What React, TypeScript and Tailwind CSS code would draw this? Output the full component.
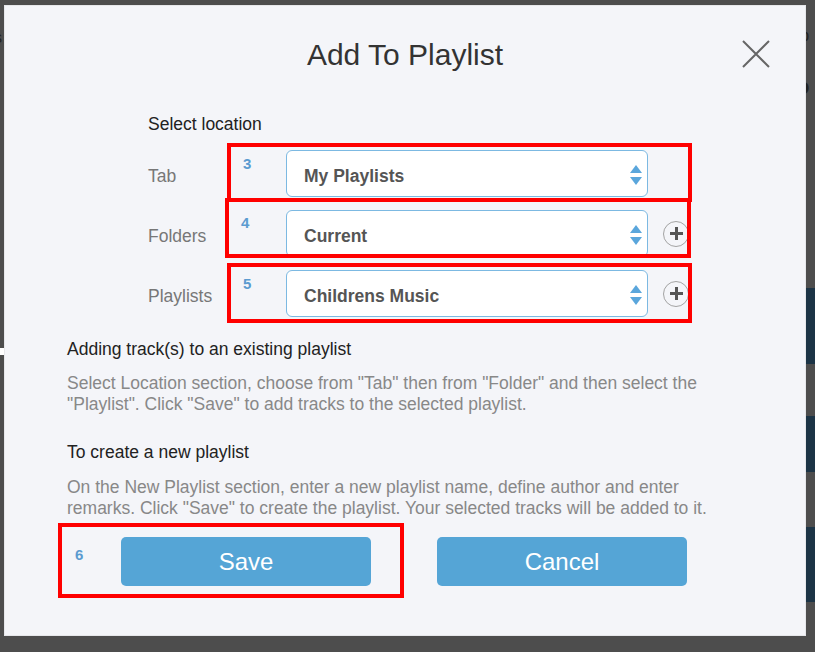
type Row = {
  label: string
  value: string
  num: string
  plus: boolean
  box: string
}

const rows: Row[] = [
  { label: "Tab", value: "My Playlists", num: "3", plus: false, box: "left-[79px] -top-[7px] w-[465px] h-[59px] pt-[9px]" },
  { label: "Folders", value: "Current", num: "4", plus: true, box: "left-[77px] -top-[12px] w-[466px] h-[60px] pt-[13px]" },
  { label: "Playlists", value: "Childrens Music", num: "5", plus: true, box: "left-[79px] -top-[7px] w-[465px] h-[60px] pt-[9px]" },
]

function Arrows() {
  return (
    <svg width="12" height="20" viewBox="0 0 12 20" className="absolute right-[5px] top-[14px]">
      <polygon points="6,0 12,8 0,8" fill="#5aa6dc" />
      <polygon points="0,12 12,12 6,20" fill="#5aa6dc" />
    </svg>
  )
}

function PlusButton() {
  return (
    <div className="ml-[15px] flex h-[26px] w-[26px] items-center justify-center rounded-full border-[1.5px] border-[#a3a3a3]">
      <svg width="13" height="13" viewBox="0 0 13 13">
        <rect x="5" y="0" width="3" height="13" fill="#555" />
        <rect x="0" y="5" width="13" height="3" fill="#555" />
      </svg>
    </div>
  )
}

function SelectRow({ row }: { row: Row }) {
  return (
    <div className="relative flex h-[47px] items-center">
      <span className="w-[138px] pt-[5px] text-[17.5px] text-[#777]">{row.label}</span>
      <div className="relative flex h-[47px] w-[362px] items-center rounded-[6px] border border-[#7cb9e2] bg-white pl-[17px] pt-[5px] text-[17.5px] font-bold text-[#555]">
        {row.value}
        <Arrows />
      </div>
      {row.plus && <PlusButton />}
      {/* annotation */}
      <div className={`pointer-events-none absolute border-[4px] border-[#ff0000] pl-[12px] text-[15px] font-bold leading-[15px] text-[#5b9bd0] ${row.box}`}>
        {row.num}
      </div>
    </div>
  )
}

export default function App() {
  return (
    <div className="relative h-[652px] w-[815px] overflow-hidden bg-[#4d4d4d] font-['Liberation_Sans',Arial,sans-serif]">
      {/* page behind the dialog */}
      <span className="absolute -left-[6px] top-[26px] text-[16px] text-[#222]">s</span>
      <span className="absolute left-[770px] top-[24px] text-[16px] text-[#222]">Temp</span>
      <span className="absolute left-[780px] top-[70px] text-[22px] font-bold text-[#222]">Co</span>
      <div className="absolute left-0 top-[348px] h-[7px] w-[6px] bg-white" />
      <div className="absolute left-[790px] top-[288px] h-[76px] w-[40px] bg-[#1c3446]" />
      <div className="absolute left-[790px] top-[416px] h-[56px] w-[40px] bg-[#1c3446]" />
      <div className="absolute left-[790px] top-[527px] h-[75px] w-[40px] bg-[#1c3446]" />

      <div className="absolute left-[4px] top-[5px] h-[631px] w-[802px] border border-[#e6e7ea] bg-[#f4f5f9]">
        <div className="relative pt-[32px] text-center text-[30px] leading-[34px] text-[#333]">
          Add To Playlist
          <svg width="28" height="28" viewBox="0 0 28 28" className="absolute left-[737px] top-[34px]">
            <path d="M1 1 L27 27 M27 1 L1 27" stroke="#666" strokeWidth="2" fill="none" />
          </svg>
        </div>

        <div className="ml-[143px] mt-[42px] text-[17.5px] leading-[20px] text-[#222]">Select location</div>

        <div className="ml-[143px] mt-[16px] flex flex-col gap-[13px]">
          {rows.map((r) => (
            <SelectRow key={r.label} row={r} />
          ))}
        </div>

        <div className="ml-[62px] w-[665px] text-[17.5px]">
          <div className="mt-[22px] leading-[20px] text-[#222]">Adding track(s) to an existing playlist</div>
          <p className="mt-[14px] leading-[21px] text-[#888]">
            Select Location section, choose from "Tab" then from "Folder" and then select the "Playlist". Click "Save" to add tracks to the selected playlist.
          </p>
          <div className="mt-[27px] leading-[20px] text-[#222]">To create a new playlist</div>
          <p className="mt-[15px] leading-[21px] text-[#888]">
            On the New Playlist section, enter a new playlist name, define author and enter remarks. Click "Save" to create the playlist. Your selected tracks will be added to it.
          </p>
        </div>

        <div className="relative ml-[116px] mt-[18px] flex gap-[66px]">
          <button className="h-[49px] w-[250px] rounded-[5px] bg-[#55a5d6] text-[24px] text-white">Save</button>
          <button className="h-[49px] w-[250px] rounded-[5px] bg-[#55a5d6] text-[24px] text-white">Cancel</button>
          <div className="pointer-events-none absolute -left-[63px] -top-[14px] h-[75px] w-[346px] border-[4px] border-[#ff0000] pl-[13px] pt-[20px] text-[15px] font-bold leading-[15px] text-[#5b9bd0]">
            6
          </div>
        </div>
      </div>
    </div>
  )
}
